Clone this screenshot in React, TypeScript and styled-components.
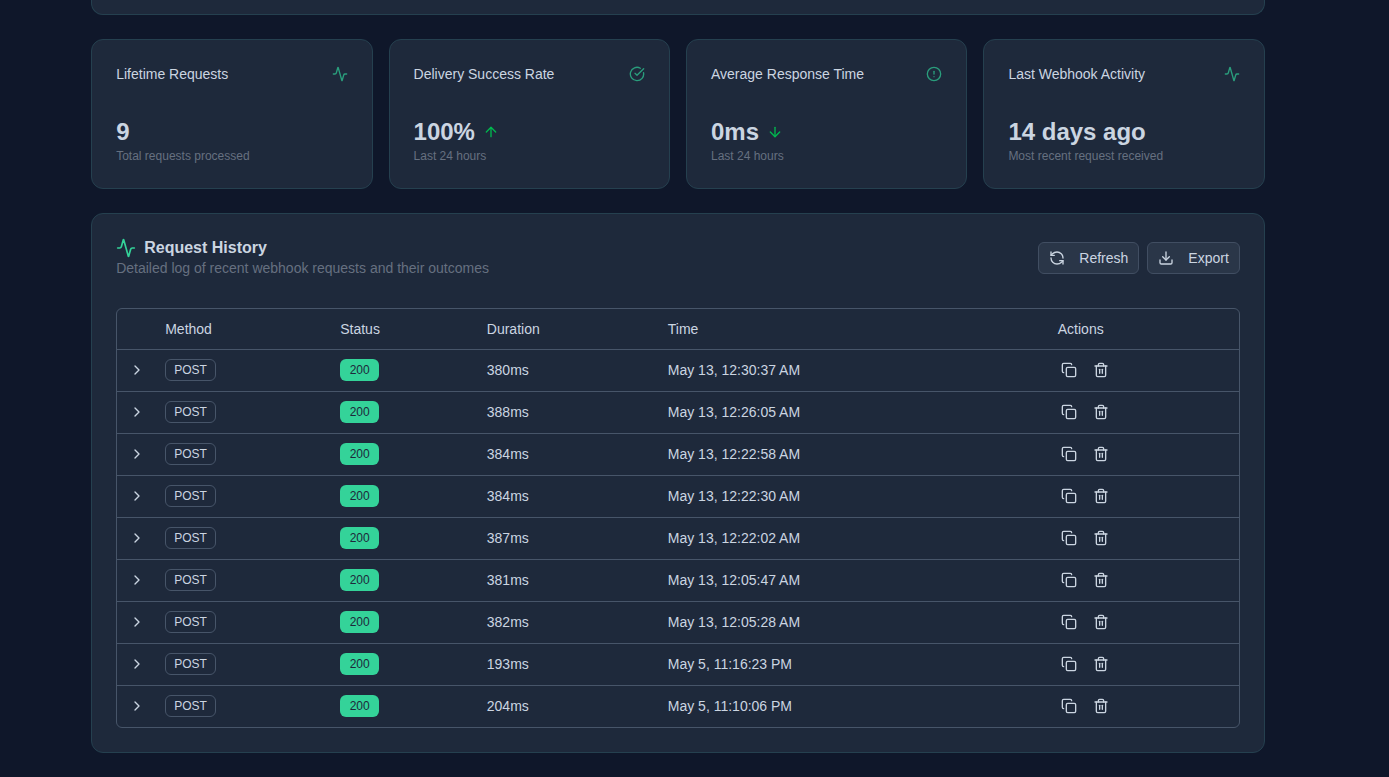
import styled, { createGlobalStyle } from "styled-components";
import {
  Activity,
  ArrowDown,
  ArrowUp,
  ChevronRight,
  CircleAlert,
  CircleCheckBig,
  Copy,
  Download,
  RefreshCcw,
  Trash2,
} from "lucide-react";

const GlobalStyle = createGlobalStyle`
  html, body {
    margin: 0;
    padding: 0;
    height: 100%;
    overflow: hidden;
    background: #0f172a;
    font-family: "Liberation Sans", Arial, sans-serif;
  }
`;

const rows = [
  { duration: "380ms", time: "May 13, 12:30:37 AM" },
  { duration: "388ms", time: "May 13, 12:26:05 AM" },
  { duration: "384ms", time: "May 13, 12:22:58 AM" },
  { duration: "384ms", time: "May 13, 12:22:30 AM" },
  { duration: "387ms", time: "May 13, 12:22:02 AM" },
  { duration: "381ms", time: "May 13, 12:05:47 AM" },
  { duration: "382ms", time: "May 13, 12:05:28 AM" },
  { duration: "193ms", time: "May 5, 11:16:23 PM" },
  { duration: "204ms", time: "May 5, 11:10:06 PM" },
];

const App = () => {
  return (
    <Page>
      <GlobalStyle />
      <TopStub />
      <StatGrid>
        <StatCard>
          <StatHead>
            <StatLabel>Lifetime Requests</StatLabel>
            <Activity size={16} />
          </StatHead>
          <StatValue>9</StatValue>
          <StatNote>Total requests processed</StatNote>
        </StatCard>
        <StatCard>
          <StatHead>
            <StatLabel>Delivery Success Rate</StatLabel>
            <CircleCheckBig size={16} />
          </StatHead>
          <StatValue>
            100%
            <ArrowUp size={16} />
          </StatValue>
          <StatNote>Last 24 hours</StatNote>
        </StatCard>
        <StatCard>
          <StatHead>
            <StatLabel>Average Response Time</StatLabel>
            <CircleAlert size={16} />
          </StatHead>
          <StatValue>
            0ms
            <ArrowDown size={16} />
          </StatValue>
          <StatNote>Last 24 hours</StatNote>
        </StatCard>
        <StatCard>
          <StatHead>
            <StatLabel>Last Webhook Activity</StatLabel>
            <Activity size={16} />
          </StatHead>
          <StatValue>14 days ago</StatValue>
          <StatNote>Most recent request received</StatNote>
        </StatCard>
      </StatGrid>

      <HistoryCard>
        <HistoryHead>
          <div>
            <HistoryTitle>
              <Activity size={20} />
              Request History
            </HistoryTitle>
            <HistorySub>Detailed log of recent webhook requests and their outcomes</HistorySub>
          </div>
          <ButtonGroup>
            <ToolButton>
              <RefreshCcw size={16} />
              Refresh
            </ToolButton>
            <ToolButton>
              <Download size={16} />
              Export
            </ToolButton>
          </ButtonGroup>
        </HistoryHead>

        <TableContainer>
          <table>
            <colgroup>
              <col style={{ width: 40 }} />
              <col style={{ width: 175 }} />
              <col style={{ width: 146.6 }} />
              <col style={{ width: 181 }} />
              <col style={{ width: 390 }} />
              <col />
            </colgroup>
            <thead>
              <THRow>
                <THead />
                <THead>Method</THead>
                <THead>Status</THead>
                <THead>Duration</THead>
                <THead>Time</THead>
                <THead>Actions</THead>
              </THRow>
            </thead>
            <tbody>
              {rows.map((row) => (
                <TRow key={row.time}>
                  <ChevronCell>
                    <ChevronRight size={16} />
                  </ChevronCell>
                  <TData>
                    <MethodBadge>POST</MethodBadge>
                  </TData>
                  <TData>
                    <StatusBadge>200</StatusBadge>
                  </TData>
                  <TData>{row.duration}</TData>
                  <TData>{row.time}</TData>
                  <TData>
                    <ActionGroup>
                      <ActionButton>
                        <Copy size={16} />
                      </ActionButton>
                      <ActionButton>
                        <Trash2 size={16} />
                      </ActionButton>
                    </ActionGroup>
                  </TData>
                </TRow>
              ))}
            </tbody>
          </table>
        </TableContainer>
      </HistoryCard>
    </Page>
  );
};

const Page = styled.div`
  box-sizing: border-box;
  width: 1173.6px;
  height: 777px;
  margin-left: 91.2px;
  display: flex;
  flex-direction: column;
  gap: 24px;
  color: #cbd5e1;
`;

const Card = styled.div`
  box-sizing: border-box;
  background: #1e293b;
  border: 1px solid #25404f;
  border-radius: 12px;
`;

const TopStub = styled(Card)`
  height: 15px;
  border-top: none;
  border-top-left-radius: 0;
  border-top-right-radius: 0;
`;

const StatGrid = styled.div`
  display: grid;
  grid-template-columns: repeat(4, 1fr);
  gap: 16px;
`;

const StatCard = styled(Card)`
  height: 150px;
  padding: 24px;
`;

const StatHead = styled.div`
  display: flex;
  justify-content: space-between;
  align-items: center;
  height: 20px;

  & svg {
    color: #2a9d7c;
  }
`;

const StatLabel = styled.div`
  font-size: 14px;
  line-height: 20px;
  color: #cbd5e1;
`;

const StatValue = styled.div`
  display: flex;
  align-items: center;
  gap: 8px;
  margin-top: 32px;
  height: 32px;
  font-size: 24px;
  line-height: 32px;
  font-weight: 700;
  color: #cbd5e1;

  & svg {
    color: #00b84f;
  }
`;

const StatNote = styled.div`
  font-size: 12px;
  line-height: 16px;
  color: #667080;
`;

const HistoryCard = styled(Card)`
  height: 540px;
  padding: 24px;
`;

const HistoryHead = styled.div`
  display: flex;
  justify-content: space-between;
  align-items: center;
  height: 40px;
`;

const HistoryTitle = styled.div`
  display: flex;
  align-items: center;
  gap: 8px;
  font-size: 16px;
  line-height: 20px;
  font-weight: 700;
  color: #cbd5e1;

  & svg {
    color: #34d399;
  }
`;

const HistorySub = styled.div`
  font-size: 14px;
  line-height: 20px;
  color: #667080;
`;

const ButtonGroup = styled.div`
  display: flex;
  gap: 8px;
`;

const ToolButton = styled.button`
  display: flex;
  align-items: center;
  gap: 14px;
  height: 32px;
  padding: 0 10px;
  background: #2a3648;
  border: 1px solid #414e62;
  border-radius: 6px;
  font-family: inherit;
  font-size: 14px;
  color: #cbd5e1;
`;

const TableContainer = styled.div`
  box-sizing: border-box;
  margin-top: 30px;
  border: 1px solid #475569;
  border-radius: 6px;
  overflow: hidden;

  & table {
    width: 100%;
    border-collapse: collapse;
    table-layout: fixed;
  }
`;

const THRow = styled.tr`
  height: 40px;
  border-bottom: 1px solid #475569;
`;

const THead = styled.th`
  padding: 0 8px;
  font-size: 14px;
  font-weight: 400;
  text-align: left;
  color: #cbd5e1;
`;

const TRow = styled.tr`
  height: 42px;
  border-bottom: 1px solid #475569;

  &:last-child {
    border-bottom: none;
  }
`;

const TData = styled.td`
  padding: 0 8px;
  font-size: 14px;
  color: #cbd5e1;
`;

const ChevronCell = styled(TData)`
  padding: 0 0 0 12px;

  & svg {
    display: block;
  }
`;

const MethodBadge = styled.span`
  display: inline-flex;
  align-items: center;
  box-sizing: border-box;
  height: 22px;
  padding: 0 8px;
  border: 1px solid #475569;
  border-radius: 6px;
  font-size: 12px;
  color: #cbd5e1;
  vertical-align: middle;
`;

const StatusBadge = styled.span`
  display: inline-flex;
  align-items: center;
  box-sizing: border-box;
  height: 22px;
  padding: 0 9.5px;
  background: #34d399;
  border-radius: 6px;
  font-size: 12px;
  color: #1e293b;
  vertical-align: middle;
`;

const ActionGroup = styled.div`
  display: flex;
  gap: 10px;
`;

const ActionButton = styled.div`
  display: flex;
  align-items: center;
  justify-content: center;
  width: 22px;
  height: 32px;
  color: #cbd5e1;
`;

export default App;
